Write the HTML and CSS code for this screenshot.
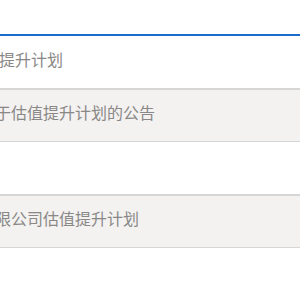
FILE: index.html
```html
<!DOCTYPE html>
<html lang="zh-CN">
<head>
    <meta charset="UTF-8">
    <meta name="viewport" content="width=device-width, initial-scale=1.0">
    <title>估值提升计划</title>
    <link rel="stylesheet" href="styles.css">
</head>
<body>
    <div class="page">
        <div class="topbar"></div>
        <div class="title">估值提升计划</div>
        <div class="field">关于估值提升计划的公告</div>
        <div class="spacer"></div>
        <div class="field">有限公司估值提升计划</div>
        <div class="spacer"></div>
        <div class="field"></div>
    </div>
</body>
</html>
```

FILE: styles.css
```css
html, body {
    margin: 0;
    padding: 0;
    overflow: hidden;
    background: #ffffff;
}

body {
    font-family: "Noto Sans CJK SC", "Noto Sans", sans-serif;
    color: #8a8886;
}

.page {
    margin-left: -40px;
    width: 380px;
}

.topbar {
    height: 34px;
    border-bottom: 2px solid #1a6dcc;
}

.title {
    height: 40px;
    padding: 12px 0 0 7px;
    font-size: 16px;
    line-height: 22px;
}

.field {
    box-sizing: border-box;
    height: 54px;
    padding: 11px 0 0 18px;
    background: #f3f2f1;
    border: 1px solid #d6d6d6;
    border-top-width: 2px;
    font-size: 16px;
    line-height: 22px;
}

.spacer {
    height: 52px;
}
```
